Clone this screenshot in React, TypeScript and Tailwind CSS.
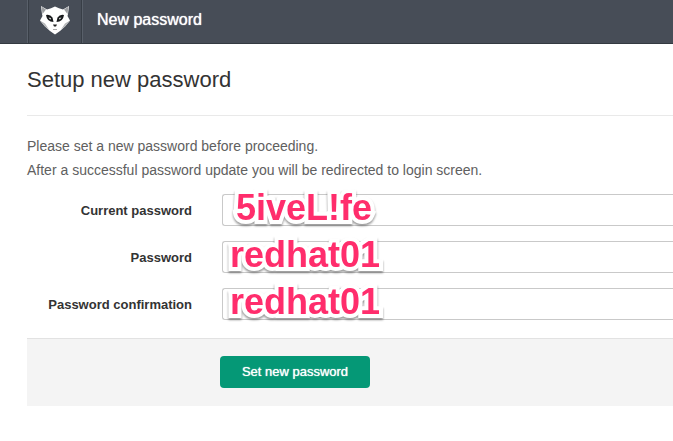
import React from "react";

function MascotLogo() {
  return (
    <svg viewBox="0 0 32 30" className="h-[30px] w-8" aria-hidden="true">
      <path d="M2 1 8 4.500Q12 3.500 16 1.500Q20 3.500 24 4.500L30 1 29 9 28.500 11 31 15.500 26 21.500 21 26 16 29.500 11 26 6 21.500 1 15.500 3.500 11 3 9Z" fill="#fff" />
      <path d="M2.500 1.500 7 4.500 3.500 9ZM29.500 1.500 25 4.500 28.500 9Z" fill="#9c9ea1" />
      <path d="M1 15.500 6 18.500 10 24.500 6 21.500ZM31 15.500 26 18.500 22 24.500 26 21.500Z" fill="#b5b7b9" />
      <path d="M7 10Q11 9 13.500 12.500L14.500 17Q8 17 7 10ZM25 10Q21 9 18.500 12.500L17.500 17Q24 17 25 10Z" fill="#17191b" />
      <path d="M9.500 12.500 12 13 12 14.500 10.500 14ZM22.500 12.500 20 13 20 14.500 21.500 14Z" fill="#c4c6c8" />
      <path d="M14 19.500H18L17 21.500H15Z" fill="#222" />
      <path d="M14 24.500H18" stroke="#aaa" strokeWidth="1" fill="none" />
    </svg>
  );
}

type FieldProps = { id: string; label: string; note: string; notePlace: string };

function Field({ id, label, note, notePlace }: FieldProps) {
  return (
    <div className="flex items-center">
      <label htmlFor={id} className="w-[165px] shrink-0 pt-0.5 text-right text-[13px] leading-5 font-bold text-[#333]">
        {label}
      </label>
      <div className="relative ml-[30px] flex-1">
        <input
          id={id}
          type="password"
          className="block h-8 w-full rounded-l-[3px] border border-r-0 border-[#c9c9c9] bg-white px-2 text-sm outline-none"
        />
        <span
          className={`pointer-events-none absolute -top-1.5 text-[36px] leading-10 font-bold whitespace-nowrap text-[#ff2d6c] [-webkit-text-stroke:8px_white] [paint-order:stroke_fill] [stroke-linejoin:round] drop-shadow-[0_2px_1px_rgba(0,0,0,0.4)] ${notePlace}`}
        >
          {note}
        </span>
      </div>
    </div>
  );
}

export default function App() {
  return (
    <div className="min-h-screen overflow-hidden bg-white font-['Liberation_Sans',Arial,sans-serif] text-[#333]">
      <header className="flex h-11 border-b border-[#343a41] bg-[#474d57] pl-[27px] text-white">
        <a
          href="#"
          aria-label="Home"
          className="flex w-14 justify-center border-x border-[#59606a] pt-[5px] shadow-[inset_1px_0_#383e46,inset_-1px_0_#383e46]"
        >
          <MascotLogo />
        </a>
        <h1 className="pt-2 pl-[14px] text-base leading-6 [text-shadow:0_0_1px_white]">New password</h1>
      </header>
      <main className="pl-[27px]">
        <h2 className="border-b border-[#e9e9e9] pt-[22px] pb-[21px] text-[22px] leading-7">Setup new password</h2>
        <div className="pt-[18px] text-sm leading-6 text-[#606060]">
          <p>Please set a new password before proceeding.</p>
          <p>After a successful password update you will be redirected to login screen.</p>
        </div>
        <form className="pt-3" onSubmit={(event) => event.preventDefault()}>
          <div className="flex flex-col gap-[15px]">
            <Field id="current-password" label="Current password" note="5iveL!fe" notePlace="left-[14px]" />
            <Field id="password" label="Password" note="redhat01" notePlace="left-2" />
            <Field id="password-confirmation" label="Password confirmation" note="redhat01" notePlace="left-2" />
          </div>
          <div className="mt-[18px] border-t border-[#e2e2e2] bg-[#f4f4f4] pt-[17px] pb-[18px] pl-[193px]">
            <button
              type="submit"
              className="h-8 w-[150px] rounded bg-[#059876] text-[13px] text-white [text-shadow:0_0_1px_white]"
            >
              Set new password
            </button>
          </div>
        </form>
      </main>
    </div>
  );
}
